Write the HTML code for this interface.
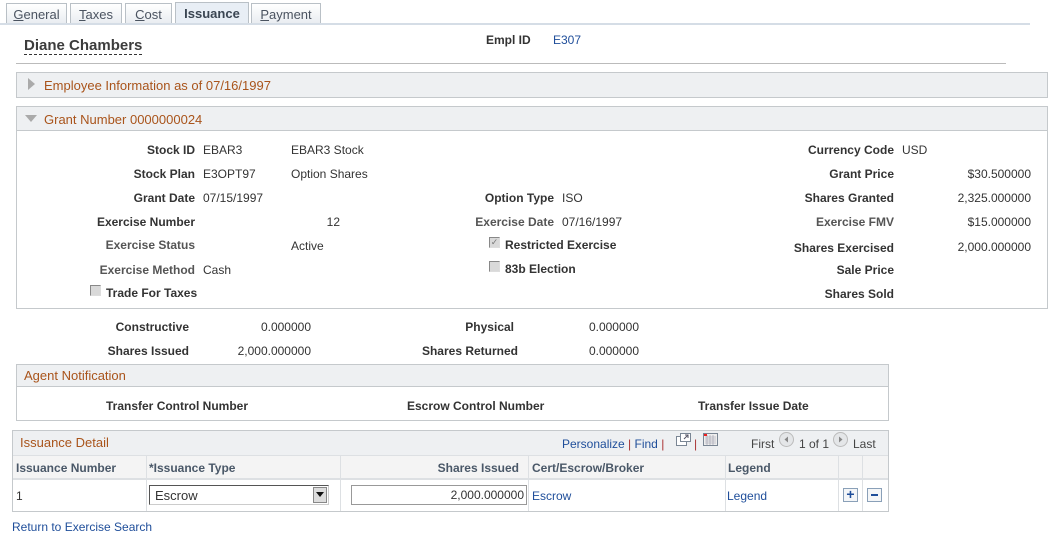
<!DOCTYPE html>
<html><head><meta charset="utf-8"><style>
body{margin:0;width:1055px;height:540px;background:#fff;font-family:"Liberation Sans",Arial,sans-serif;font-size:12px;color:#333;position:relative;overflow:hidden}
.a{position:absolute;white-space:nowrap;line-height:14px;margin-top:1px}
.r{text-align:right}
.b{font-weight:bold;color:#333}
.g{font-weight:bold;color:#555}
.lk{color:#1f4e9a}
.box{position:absolute;border:1px solid #c5c9cc;box-sizing:border-box}
.hdr{position:absolute;background:#eef0f2;border:1px solid #c5c9cc;box-sizing:border-box;color:#a9541b;font-size:13px;line-height:22px}
.tab{position:absolute;top:3px;height:20px;border:1px solid #b9c0c6;border-bottom:none;box-sizing:border-box;background:linear-gradient(#fff,#e9edf1);color:#4a5360;font-size:13px;line-height:22px;text-align:center}
.cb{position:absolute;width:11px;height:11px;border:1px solid #888;border-right-color:#ddd;border-bottom-color:#ddd;background:#d9d9d9;box-sizing:border-box}
.v{position:absolute;top:455px;width:1px;height:56px;background:#dde0e3}
</style></head><body>
<div class="tab" style="left:6px;width:61px"><u>G</u>eneral</div>
<div class="tab" style="left:70px;width:52px"><u>T</u>axes</div>
<div class="tab" style="left:125px;width:47px"><u>C</u>ost</div>
<div class="tab" style="left:175px;width:74px;background:#e8eef5;font-weight:bold;color:#3a4552;top:2px;height:21px">Issuance</div>
<div class="tab" style="left:251px;width:70px"><u>P</u>ayment</div>
<div style="position:absolute;left:0;top:23px;width:1030px;height:2px;background:#d5dde6"></div>

<div class="a" style="left:24px;top:36px;font-size:15px;font-weight:bold;color:#3c3c3c;line-height:17px;border-bottom:1px dashed #333">Diane Chambers</div>
<div class="a b" style="left:486px;top:32px">Empl ID</div>
<div class="a lk" style="left:553px;top:32px">E307</div>
<div style="position:absolute;left:16px;top:63px;width:990px;height:1px;background:#bbb"></div>

<div class="hdr" style="left:16px;top:72px;width:1032px;height:26px;padding-left:27px;line-height:25px">Employee Information as of 07/16/1997</div>
<svg style="position:absolute;left:28px;top:78px" width="8" height="12"><path d="M0 0L7 6L0 12Z" fill="#aaa"/></svg>

<div class="box" style="left:16px;top:106px;width:1032px;height:203px"></div>
<div class="hdr" style="left:16px;top:106px;width:1032px;height:25px;padding-left:27px;line-height:25px">Grant Number 0000000024</div>
<svg style="position:absolute;left:25px;top:115px" width="12" height="8"><path d="M0 0L12 0L6 7Z" fill="#aaa"/></svg>

<div class="a r b" style="left:0;width:195px;top:142px">Stock ID</div><div class="a" style="left:203px;top:142px">EBAR3</div><div class="a" style="left:291px;top:142px">EBAR3 Stock</div>
<div class="a r b" style="left:0;width:195px;top:166px">Stock Plan</div><div class="a" style="left:203px;top:166px">E3OPT97</div><div class="a" style="left:291px;top:166px">Option Shares</div>
<div class="a r b" style="left:0;width:195px;top:190px">Grant Date</div><div class="a" style="left:203px;top:190px">07/15/1997</div>
<div class="a r b" style="left:0;width:195px;top:214px">Exercise Number</div><div class="a r" style="left:240px;width:100px;top:214px">12</div>
<div class="a r g" style="left:0;width:195px;top:237px">Exercise Status</div><div class="a" style="left:291px;top:238px">Active</div>
<div class="a r g" style="left:0;width:195px;top:262px">Exercise Method</div><div class="a" style="left:203px;top:262px">Cash</div>
<div class="cb" style="left:90px;top:285px"></div><div class="a b" style="left:106px;top:285px">Trade For Taxes</div>

<div class="a r b" style="left:354px;width:200px;top:190px">Option Type</div><div class="a" style="left:562px;top:190px">ISO</div>
<div class="a r g" style="left:354px;width:200px;top:214px">Exercise Date</div><div class="a" style="left:562px;top:214px">07/16/1997</div>
<div class="cb" style="left:489px;top:237px;font-size:9px;line-height:9px;color:#777;text-align:center">✓</div><div class="a b" style="left:505px;top:237px">Restricted Exercise</div>
<div class="cb" style="left:489px;top:261px"></div><div class="a b" style="left:505px;top:261px">83b Election</div>

<div class="a r b" style="left:694px;width:200px;top:142px">Currency Code</div><div class="a" style="left:902px;top:142px">USD</div>
<div class="a r b" style="left:694px;width:200px;top:166px">Grant Price</div><div class="a r" style="left:900px;width:131px;top:166px">$30.500000</div>
<div class="a r b" style="left:694px;width:200px;top:190px">Shares Granted</div><div class="a r" style="left:900px;width:131px;top:190px">2,325.000000</div>
<div class="a r g" style="left:694px;width:200px;top:214px">Exercise FMV</div><div class="a r" style="left:900px;width:131px;top:214px">$15.000000</div>
<div class="a r b" style="left:694px;width:200px;top:240px">Shares Exercised</div><div class="a r" style="left:900px;width:131px;top:239px">2,000.000000</div>
<div class="a r b" style="left:694px;width:200px;top:262px">Sale Price</div>
<div class="a r b" style="left:694px;width:200px;top:286px">Shares Sold</div>

<div class="a r b" style="left:0;width:189px;top:319px">Constructive</div><div class="a r" style="left:200px;width:111px;top:319px">0.000000</div>
<div class="a r b" style="left:0;width:189px;top:343px">Shares Issued</div><div class="a r" style="left:200px;width:111px;top:343px">2,000.000000</div>
<div class="a r b" style="left:314px;width:200px;top:319px">Physical</div><div class="a r" style="left:530px;width:109px;top:319px">0.000000</div>
<div class="a r b" style="left:314px;width:204px;top:343px">Shares Returned</div><div class="a r" style="left:530px;width:109px;top:343px">0.000000</div>

<div class="box" style="left:16px;top:364px;width:873px;height:57px"></div>
<div class="hdr" style="left:16px;top:364px;width:873px;height:23px;padding-left:7px;line-height:21px">Agent Notification</div>
<div class="a b" style="left:106px;top:398px">Transfer Control Number</div>
<div class="a b" style="left:407px;top:398px">Escrow Control Number</div>
<div class="a b" style="left:698px;top:398px">Transfer Issue Date</div>

<div class="box" style="left:12px;top:430px;width:877px;height:82px"></div>
<div class="hdr" style="left:12px;top:430px;width:877px;height:25px;padding-left:7px;line-height:24px;border-bottom:none">Issuance Detail</div>
<div class="a lk" style="left:562px;top:436px">Personalize <span style="color:#a33">|</span> Find <span style="color:#a33">|</span></div>
<svg style="position:absolute;left:676px;top:433px" width="15" height="13"><rect x="0.5" y="3.5" width="10" height="9" fill="#fff" stroke="#7a8694"/><rect x="4.5" y="0.5" width="10" height="8" fill="#fff" stroke="#7a8694"/><path d="M8 6L12 2M9 2h3v3" stroke="#556" fill="none"/></svg>
<div class="a" style="left:694px;top:436px;color:#a33">|</div>
<svg style="position:absolute;left:703px;top:433px" width="15" height="13"><rect x="0.5" y="0.5" width="14" height="12" fill="#eee" stroke="#7a8694"/><path d="M2 4h11M2 6h11M2 8h11M2 10h11M4 2v10M7 2v10M10 2v10" stroke="#99a" stroke-width=".6"/><rect x="1" y="1" width="3" height="2" fill="#e22"/></svg>
<div class="a" style="left:751px;top:436px;color:#444">First</div>
<svg style="position:absolute;left:779px;top:432px" width="15" height="15"><circle cx="7.5" cy="7.5" r="7" fill="#e4e6e8" stroke="#bbb"/><path d="M9 4.5L5.5 7.5L9 10.5Z" fill="#888"/></svg>
<div class="a" style="left:799px;top:436px;color:#444">1 of 1</div>
<svg style="position:absolute;left:833px;top:432px" width="15" height="15"><circle cx="7.5" cy="7.5" r="7" fill="#e4e6e8" stroke="#bbb"/><path d="M6 4.5L9.5 7.5L6 10.5Z" fill="#888"/></svg>
<div class="a" style="left:853px;top:436px;color:#444">Last</div>

<div style="position:absolute;left:13px;top:455px;width:875px;height:25px;background:#f4f4f4;border-top:1px solid #dde0e3;border-bottom:2px solid #dde0e3;box-sizing:border-box"></div>
<div class="v" style="left:146px"></div><div class="v" style="left:340px"></div><div class="v" style="left:528px"></div><div class="v" style="left:725px"></div><div class="v" style="left:838px"></div><div class="v" style="left:862px"></div>
<div class="a" style="left:16px;top:460px;font-weight:bold;color:#4a5868">Issuance Number</div>
<div class="a" style="left:149px;top:460px;font-weight:bold;color:#4a5868">*Issuance Type</div>
<div class="a r" style="left:340px;width:179px;top:460px;font-weight:bold;color:#4a5868">Shares Issued</div>
<div class="a" style="left:532px;top:460px;font-weight:bold;color:#4a5868">Cert/Escrow/Broker</div>
<div class="a" style="left:728px;top:460px;font-weight:bold;color:#4a5868">Legend</div>

<div class="a" style="left:16px;top:488px">1</div>
<div style="position:absolute;left:149px;top:485px;width:180px;height:20px;border:1px solid #555;border-right-color:#ccc;border-bottom-color:#ccc;box-sizing:border-box;font-size:13px;line-height:19px;padding-left:5px">Escrow</div>
<div style="position:absolute;left:313px;top:487px;width:14px;height:16px;background:#ddd;border:1px solid #888;box-sizing:border-box"></div>
<svg style="position:absolute;left:316px;top:492px" width="8" height="5"><path d="M0 0h8L4 5Z" fill="#111"/></svg>
<div style="position:absolute;left:351px;top:485px;width:176px;height:20px;border:1px solid #999;box-sizing:border-box;text-align:right;padding-right:2px;line-height:19px">2,000.000000</div>
<div class="a lk" style="left:532px;top:488px">Escrow</div>
<div class="a lk" style="left:727px;top:488px">Legend</div>
<div style="position:absolute;left:843px;top:488px;width:15px;height:14px;border:1px solid #8aa0b8;background:#f4f6f8;box-sizing:border-box;color:#1f4e9a;font-weight:bold;font-size:14px;line-height:11px;text-align:center">+</div>
<div style="position:absolute;left:867px;top:488px;width:15px;height:14px;border:1px solid #8aa0b8;background:#f4f6f8;box-sizing:border-box"><div style="position:absolute;left:3px;top:5px;width:7px;height:2px;background:#1f4e9a"></div></div>

<div class="a lk" style="left:12px;top:519px">Return to Exercise Search</div>
</body></html>
